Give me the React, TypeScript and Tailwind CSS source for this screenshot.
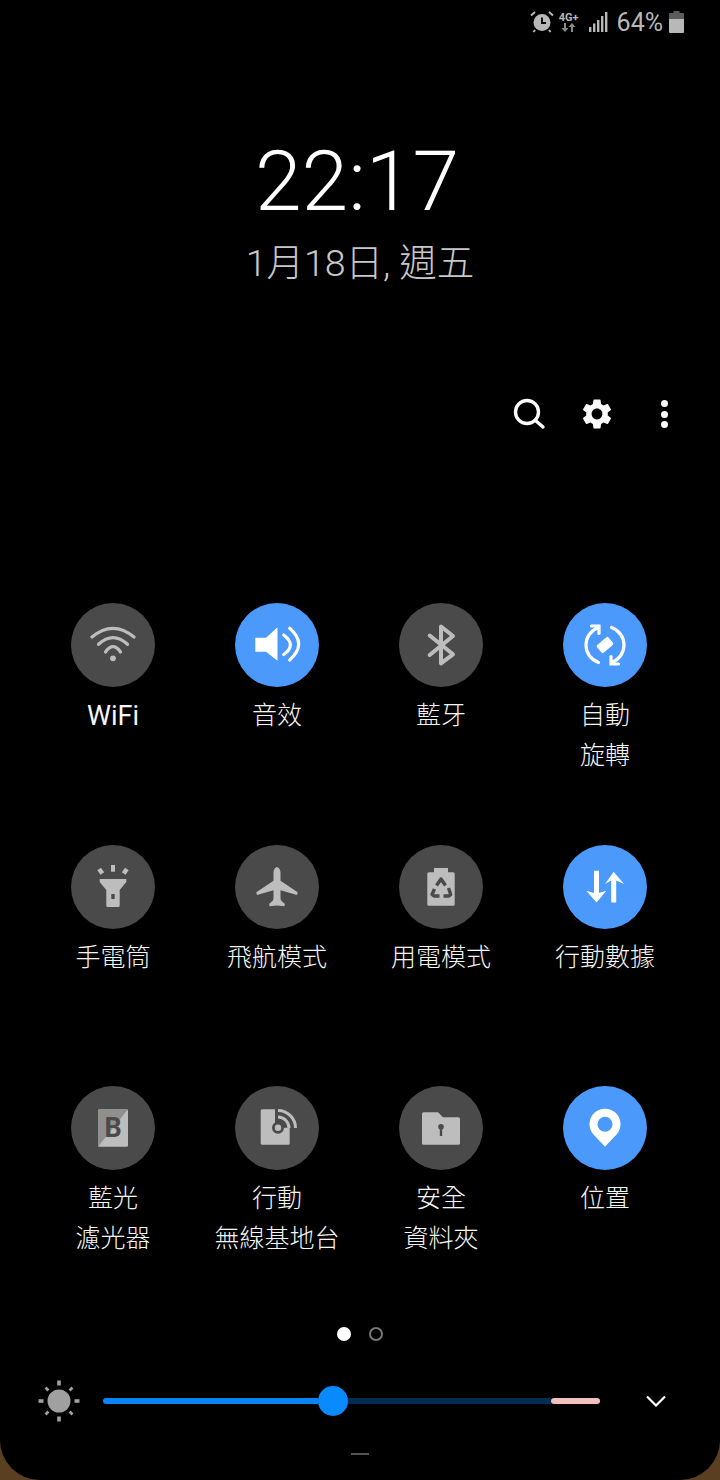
import React from 'react';

const GREY = '#bdbdbd';
const DARK = '#4a4a4a';

const WifiIcon = () => (
  <svg width="48" height="48" viewBox="0 0 48 48" fill="none" stroke={GREY} strokeWidth="3.2" strokeLinecap="round">
    <path d="M3 16Q24 -1.4 45 16" />
    <path d="M9.5 23.3Q24 10 38.5 23.3" />
    <path d="M16.5 31Q24 20.4 31.5 31" />
    <circle cx="24" cy="37.3" r="2.9" fill={GREY} stroke="none" />
  </svg>
);

const SoundIcon = () => (
  <svg width="48" height="48" viewBox="0 0 48 48" fill="none" stroke="#fff" strokeWidth="3.2" strokeLinecap="round">
    <path d="M2.3 16.7H13L24.5 6.3V39.7L13 30.7H2.3Z" fill="#fff" stroke="none" />
    <path d="M30.7 14Q44 24 30.7 33.5" />
    <path d="M36.7 7.3Q54.7 23 36.7 39" />
  </svg>
);

const BluetoothIcon = () => (
  <svg width="48" height="48" viewBox="0 0 48 48" fill="none" stroke={GREY} strokeWidth="4" strokeLinejoin="round" strokeLinecap="round">
    <path d="M12.7 14.5L36 33.3L24 42.3V5.5L36 15L12.7 34" />
  </svg>
);

const RotateIcon = () => (
  <svg width="48" height="48" viewBox="0 0 48 48" fill="none" stroke="#fff" strokeWidth="3.2" strokeLinecap="round">
    <rect x="16.5" y="19" width="15" height="10" rx="1.5" fill="#fff" stroke="none" transform="rotate(-40 24 24)" />
    <path d="M17.5 41.5A18.5 18.5 0 0 1 17.5 6.5" />
    <path d="M10.5 5H18V12.5" />
    <path d="M30.5 6.5A18.5 18.5 0 0 1 30.5 41.5" />
    <path d="M37.5 43H30V35.5" />
  </svg>
);

const TorchIcon = () => (
  <svg width="48" height="48" viewBox="0 0 48 48" fill={GREY}>
    <rect x="22" y="2" width="4" height="6.7" />
    <rect x="9.5" y="5.5" width="4.5" height="5.6" transform="rotate(-35 11.7 8.3)" />
    <rect x="34" y="5.5" width="4.5" height="5.6" transform="rotate(35 36.3 8.3)" />
    <path d="M10.7 16H37.3V19L30.7 27V42.5A1.5 1.5 0 0 1 29.2 44H18.8A1.5 1.5 0 0 1 17.3 42.5V27L10.7 19Z" />
    <rect x="22.3" y="31" width="3.4" height="5" fill={DARK} />
  </svg>
);

const PlaneIcon = () => (
  <svg width="48" height="48" viewBox="0 0 48 48" fill={GREY}>
    <path d="M24 4.3C26 4.3 27.5 7 27.5 10V17.7L44.7 29.3L44 32L27.5 27.2V35C27.5 36 27.8 37 28.3 37.7L32 41L31.3 43.3L24 42.5L16.7 43.3L16 41L19.7 37.7C20.2 37 20.5 36 20.5 35V27.2L4 32L3.3 29.3L20.5 17.7V10C20.5 7 22 4.3 24 4.3Z" />
  </svg>
);

const BatteryIcon = () => (
  <svg width="48" height="48" viewBox="0 0 48 48" fill="none">
    <path d="M17 5H31V9.3H36.2A1.5 1.5 0 0 1 37.7 10.8V41.2A1.5 1.5 0 0 1 36.2 42.7H11.8A1.5 1.5 0 0 1 10.3 41.2V10.8A1.5 1.5 0 0 1 11.8 9.3H17Z" fill={GREY} />
    <g stroke={DARK} strokeWidth="3.4" strokeLinejoin="round">
      <path d="M19.5 22.5L24 16L28.5 22.5" />
      <path d="M17.5 26L15 31.5L17 33H22.5" />
      <path d="M31.5 25L33.7 31.5L32 33H26.5" />
    </g>
  </svg>
);

const DataIcon = () => (
  <svg width="48" height="48" viewBox="0 0 48 48" fill="#fff">
    <path d="M13 7.7H18V30L25.3 27.7L15.5 39.5L5.3 27.7L13 30Z" />
    <path d="M30.2 39.5H35.2V17.5L43 21L32.7 8.7L24 21L30.2 17.5Z" />
  </svg>
);

const BlueLightIcon = () => (
  <svg width="48" height="48" viewBox="0 0 48 48">
    <rect x="9" y="5.3" width="30" height="37.4" rx="1.5" fill={GREY} />
    <path d="M39 5.3H10.5A1.5 1.5 0 0 0 9 6.8V42.7Z" fill="#8f8f8f" />
    <text x="24" y="33" textAnchor="middle" fontSize="27" fontWeight="700" fontFamily="Roboto, sans-serif" fill={DARK}>B</text>
  </svg>
);

const HotspotIcon = () => (
  <svg width="48" height="48" viewBox="0 0 48 48" fill="none">
    <path d="M9.2 5.3H22V23.7H36.7V39.2A1.5 1.5 0 0 1 35.2 40.7H9.2A1.5 1.5 0 0 1 7.7 39.2V6.8A1.5 1.5 0 0 1 9.2 5.3Z" fill={GREY} />
    <g stroke={GREY} strokeWidth="3">
      <path d="M25 6.5A17.5 17.5 0 0 1 42.5 24" />
      <path d="M25 13A11 11 0 0 1 36 24" />
    </g>
    <circle cx="25" cy="23.7" r="4.6" fill={GREY} stroke={DARK} strokeWidth="2.8" />
  </svg>
);

const FolderIcon = () => (
  <svg width="48" height="48" viewBox="0 0 48 48">
    <path d="M6.5 8.3H21L26 13.3H41.5A1.5 1.5 0 0 1 43 14.8V39.2A1.5 1.5 0 0 1 41.5 40.7H6.5A1.5 1.5 0 0 1 5 39.2V9.8A1.5 1.5 0 0 1 6.5 8.3Z" fill={GREY} />
    <circle cx="24" cy="22.7" r="2.8" fill={DARK} />
    <rect x="22.8" y="23" width="2.4" height="9" fill={DARK} />
  </svg>
);

const PinIcon = () => (
  <svg width="48" height="48" viewBox="0 0 48 48">
    <path d="M24 42.7L12 30A15.5 15.5 0 1 1 36 30Z" fill="#fff" />
    <circle cx="24" cy="20.3" r="7.5" fill="#4a99fb" />
  </svg>
);

const tiles = [
  { label: ['WiFi'], icon: <WifiIcon />, on: false },
  { label: ['音效'], icon: <SoundIcon />, on: true },
  { label: ['藍牙'], icon: <BluetoothIcon />, on: false },
  { label: ['自動', '旋轉'], icon: <RotateIcon />, on: true },
  { label: ['手電筒'], icon: <TorchIcon />, on: false },
  { label: ['飛航模式'], icon: <PlaneIcon />, on: false },
  { label: ['用電模式'], icon: <BatteryIcon />, on: false },
  { label: ['行動數據'], icon: <DataIcon />, on: true },
  { label: ['藍光', '濾光器'], icon: <BlueLightIcon />, on: false },
  { label: ['行動', '無線基地台'], icon: <HotspotIcon />, on: false },
  { label: ['安全', '資料夾'], icon: <FolderIcon />, on: false },
  { label: ['位置'], icon: <PinIcon />, on: true },
];

function StatusBar() {
  return (
    <div className="flex h-[42px] items-center justify-end pr-[36px] pt-[1px] text-[#b8b8b8]">
      <svg width="24" height="24" viewBox="0 0 24 24" fill="none" className="mr-[4px]">
        <circle cx="12" cy="12.5" r="8.5" fill="#b8b8b8" />
        <path d="M12 7.5V13H16" stroke="#000" strokeWidth="1.8" />
        <path d="M1 5.5L5 2M23 5.5L19 2M5 20L3.5 22M19 20L20.5 22" stroke="#b8b8b8" strokeWidth="2" />
      </svg>
      <div className="mr-[9px] flex w-[22px] flex-col items-center">
        <span className="font-['Roboto'] text-[11px] font-bold leading-[11px]">4G+</span>
        <svg width="15" height="9" viewBox="0 0 15 9" fill="#8a8a8a">
          <path d="M3 0H5V5H7.5L4 9L.5 5H3Z" />
          <path d="M10 9H12V4H14.5L11 0L7.5 4H10Z" />
        </svg>
      </div>
      <svg width="19" height="20" viewBox="0 0 19 20" fill="#b8b8b8" className="mr-[9px]">
        <rect x="0" y="15" width="2.4" height="5" />
        <rect x="4" y="11.5" width="2.4" height="8.5" />
        <rect x="8" y="8" width="2.4" height="12" />
        <rect x="12" y="4" width="2.4" height="16" />
        <rect x="16" y="0" width="2.4" height="20" />
      </svg>
      <span className="mr-[6px] pt-[1px] font-['Roboto'] text-[25px] leading-none">64%</span>
      <svg width="15" height="22" viewBox="0 0 15 22">
        <path d="M4.5 0H10.5V2H14A1 1 0 0 1 15 3V8H0V3A1 1 0 0 1 1 2H4.5Z" fill="#5c5c5c" />
        <path d="M0 8H15V21A1 1 0 0 1 14 22H1A1 1 0 0 1 0 21Z" fill="#b8b8b8" />
      </svg>
    </div>
  );
}

function Tile({ label, icon, on }: { label: string[]; icon: React.ReactNode; on: boolean }) {
  const latin = label[0] === 'WiFi';
  return (
    <div className="flex flex-col items-center">
      <div className={`flex h-[84px] w-[84px] items-center justify-center rounded-full ${on ? 'bg-[#4a99fb]' : 'bg-[#4a4a4a]'}`}>
        {icon}
      </div>
      <div className={`mt-[9px] text-center font-['Roboto','Noto_Sans_CJK_TC',sans-serif] leading-[40px] text-[#f5f5f5] ${latin ? 'text-[27px] font-normal' : 'text-[25px] font-light'}`}>
        {label.map(line => (
          <div key={line} className="whitespace-nowrap">{line}</div>
        ))}
      </div>
    </div>
  );
}

function Sun() {
  const rays = [0, 45, 90, 135, 180, 225, 270, 315];
  return (
    <svg width="42" height="42" viewBox="0 0 42 42" fill="#a0a0a0">
      <circle cx="21" cy="21" r="11.5" />
      {rays.map(deg => (
        <rect
          key={deg}
          x={deg % 90 === 0 ? 19.2 : 19.6}
          y="0.5"
          width={deg % 90 === 0 ? 3.6 : 2.8}
          height={deg % 90 === 0 ? 5 : 4}
          transform={`rotate(${deg} 21 21)${deg % 90 === 0 ? '' : ' translate(0 1.5)'}`}
        />
      ))}
    </svg>
  );
}

export default function App() {
  return (
    <div className="h-[1480px] w-[720px] bg-[#5a4020]">
      <div className="flex h-full flex-col overflow-hidden rounded-b-[40px] bg-black">
        <StatusBar />

        <div className="mt-[90px] pr-[6px] text-center font-['Roboto'] text-[84px] font-light leading-[100px] text-white">22:17</div>
        <div className="mt-[6px] text-center font-['Roboto','Noto_Sans_CJK_TC',sans-serif] text-[37.5px] font-light leading-[50px] text-[#c8c8c8]">
          1月18日, 週五
        </div>

        <div className="mt-[106px] flex h-[40px] items-center justify-end pr-[52px]">
          <svg width="36" height="36" viewBox="0 0 36 36" fill="none" stroke="#fafafa" strokeWidth="3.4" strokeLinecap="round" className="mr-[32px]">
            <circle cx="16" cy="16" r="11.5" />
            <path d="M24.5 24.5L32 31" />
          </svg>
          <svg width="36" height="36" viewBox="0 0 24 24" fill="#fafafa" className="mr-[46px]">
            <path d="M19.14 12.94c.04-.3.06-.61.06-.94 0-.32-.02-.64-.07-.94l2.03-1.58c.18-.14.23-.41.12-.61l-1.92-3.32c-.12-.22-.37-.29-.59-.22l-2.39.96c-.5-.38-1.03-.7-1.62-.94l-.36-2.54c-.04-.24-.24-.41-.48-.41h-3.84c-.24 0-.43.17-.47.41l-.36 2.54c-.59.24-1.13.57-1.62.94l-2.39-.96c-.22-.08-.47 0-.59.22L2.74 8.87c-.12.21-.08.47.12.61l2.03 1.58c-.05.3-.09.63-.09.94s.02.64.07.94l-2.03 1.58c-.18.14-.23.41-.12.61l1.92 3.32c.12.22.37.29.59.22l2.39-.96c.5.38 1.03.7 1.62.94l.36 2.54c.05.24.24.41.48.41h3.84c.24 0 .44-.17.47-.41l.36-2.54c.59-.24 1.13-.56 1.62-.94l2.39.96c.22.08.47 0 .59-.22l1.92-3.32c.12-.22.07-.47-.12-.61l-2.01-1.58zM12 15.6c-1.98 0-3.6-1.62-3.6-3.6s1.62-3.6 3.6-3.6 3.6 1.62 3.6 3.6-1.62 3.6-3.6 3.6z" />
          </svg>
          <div className="flex flex-col gap-[3.5px]">
            <div className="h-[7px] w-[7px] rounded-full bg-[#fafafa]" />
            <div className="h-[7px] w-[7px] rounded-full bg-[#fafafa]" />
            <div className="h-[7px] w-[7px] rounded-full bg-[#fafafa]" />
          </div>
        </div>

        <div className="mt-[169px] ml-[31px] grid w-[656px] grid-cols-4 auto-rows-[241.5px]">
          {tiles.map(t => (
            <Tile key={t.label.join('')} label={t.label} icon={t.icon} on={t.on} />
          ))}
        </div>

        <div className="mt-[-1px] flex items-center justify-center gap-[18px]">
          <div className="h-[14px] w-[14px] rounded-full bg-white" />
          <div className="h-[14px] w-[14px] rounded-full border-2 border-[#777777]" />
        </div>

        <div className="mt-[39px] flex h-[42px] items-center pl-[38px]">
          <Sun />
          <div className="ml-[23px] flex items-center">
            <div className="h-[6px] w-[215px] rounded-l-full bg-[#0a84f5]" />
            <div className="h-[30px] w-[30px] rounded-full bg-[#0a8aff]" />
            <div className="h-[6px] w-[203px] bg-[#012d52]" />
            <div className="h-[6px] w-[49px] rounded-full bg-[#f3c0c0]" />
          </div>
          <svg width="20" height="12" viewBox="0 0 20 12" fill="none" stroke="#fff" strokeWidth="2.2" className="ml-[46px]">
            <path d="M1 1.5L10 10.5L19 1.5" />
          </svg>
        </div>

        <div className="mx-auto mt-[31px] h-[2px] w-[18px] bg-[#555555]" />
      </div>
    </div>
  );
}
